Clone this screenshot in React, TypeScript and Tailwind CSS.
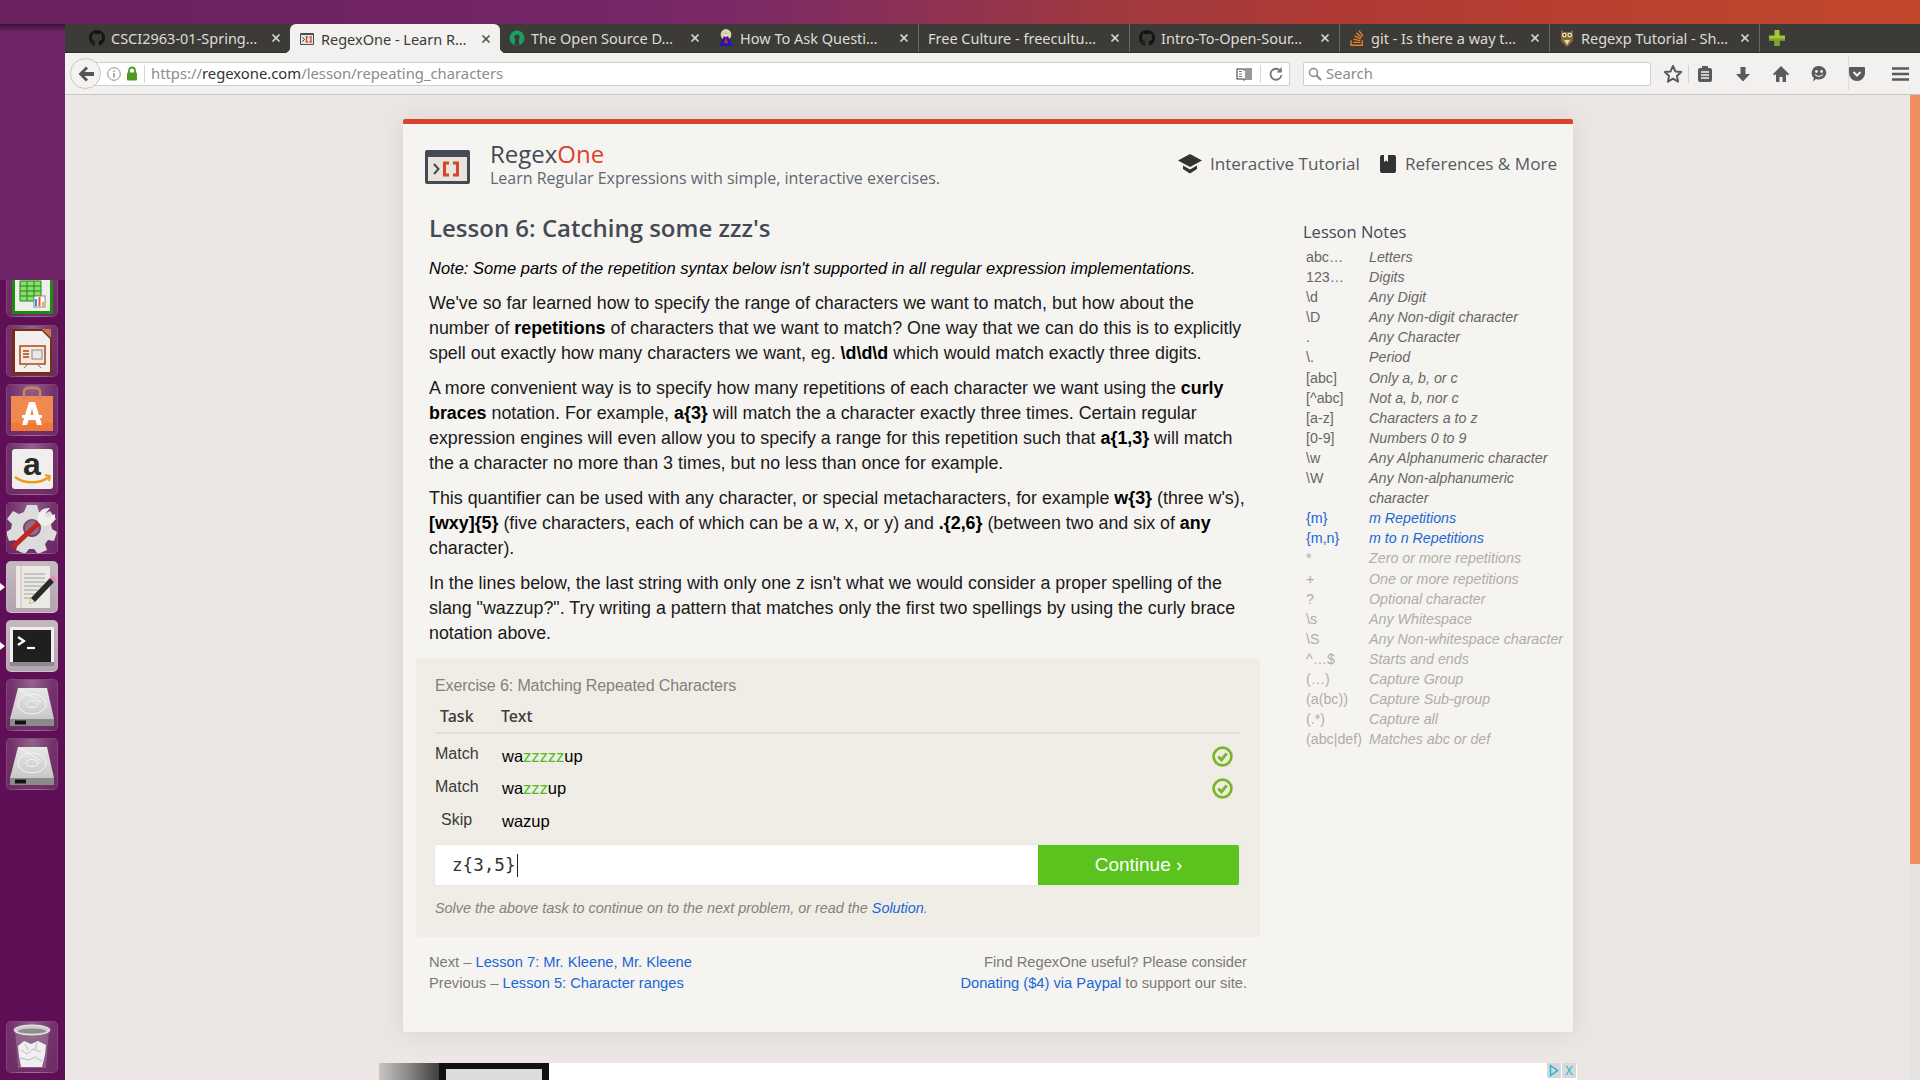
import React from "react";
import { FaGithub, FaStackOverflow } from "react-icons/fa";
import { X } from "lucide-react";

const fira = "font-['Open_Sans','Noto_Sans',sans-serif]";

function RegexFav({ s = 16 }: { s?: number }) {
  return (
    <svg width={s} height={s} viewBox="0 0 16 16">
      <rect x="1" y="2" width="14" height="12" rx="1" fill="#4a4f57" />
      <rect x="2" y="4" width="12" height="9" fill="#e5e3dc" />
      <path d="M3.500 6.500 5.500 8.500 3.500 10.500" stroke="#333" fill="none" />
      <path d="M9 6H7.500V11H9M10.500 6H12V11H10.500" stroke="#d8442a" strokeWidth="1.300" fill="none" />
    </svg>
  );
}
function OsiFav() {
  return (
    <svg width="16" height="16" viewBox="0 0 16 16">
      <circle cx="8" cy="8" r="7.500" fill="#1c9f63" />
      <circle cx="8" cy="7" r="2.600" fill="#3c3b37" />
      <path d="M6.500 8.500 5.500 15h5L9.500 8.500z" fill="#3c3b37" />
    </svg>
  );
}
function WizardFav() {
  return (
    <svg width="18" height="20" viewBox="0 0 18 20">
      <circle cx="9" cy="6" r="6" fill="#d9d6a8" />
      <path d="M9 4 17 19H1z" fill="#1a1ab8" />
      <path d="M9 9 11.500 16h-5z" fill="#e02020" />
      <circle cx="9" cy="7" r="2" fill="#f2e2c4" />
    </svg>
  );
}
function OwlFav() {
  return (
    <svg width="16" height="20" viewBox="0 0 16 20">
      <path d="M2 2 5 4h6l3-2v11l-6 6-6-6z" fill="#8a6a32" />
      <circle cx="5.300" cy="7" r="2.300" fill="#f1ebd8" />
      <circle cx="10.700" cy="7" r="2.300" fill="#f1ebd8" />
      <circle cx="5.300" cy="7" r="1" fill="#222" />
      <circle cx="10.700" cy="7" r="1" fill="#222" />
      <path d="M5 12h6l-3 5z" fill="#e6d9b8" />
    </svg>
  );
}

const tabs: { t: string; w: number; icon?: React.ReactNode; active?: boolean }[] = [
  { t: "CSCI2963-01-Spring…", w: 210, icon: <FaGithub className="text-[18px] text-[#141414]" /> },
  { t: "RegexOne - Learn R…", w: 210, icon: <RegexFav />, active: true },
  { t: "The Open Source D…", w: 209, icon: <OsiFav /> },
  { t: "How To Ask Questi…", w: 210, icon: <WizardFav /> },
  { t: "Free Culture - freecultu…", w: 211 },
  { t: "Intro-To-Open-Sour…", w: 210, icon: <FaGithub className="text-[18px] text-[#141414]" /> },
  { t: "git - Is there a way t…", w: 210, icon: <FaStackOverflow className="text-[18px] text-[#e8802a]" /> },
  { t: "Regexp Tutorial - Sh…", w: 210, icon: <OwlFav /> },
];

function TabBar() {
  return (
    <div className="h-[29px] bg-[#3c3b37] flex items-stretch pl-[15px] border-b border-[#2e2d2a] font-['Noto_Sans',sans-serif] text-[14.5px]">
      {tabs.map((tab, i) => (
        <div
          key={i}
          style={{ width: tab.w }}
          className={
            tab.active
              ? "relative z-10 flex items-center pl-[9px] pr-[8px] gap-[6px] bg-[#f2f1ef] text-[#3c3b37] rounded-t-[6px] h-[29px]"
              : "flex items-center pl-[9px] pr-[8px] gap-[6px] text-[#dcdbd6] " + (i > 2 ? "border-r border-[#6a6963]" : "")
          }
        >
          {tab.active && (
            <>
              <span className="absolute -left-[6px] bottom-0 w-[6px] h-[6px] bg-[radial-gradient(circle_at_0_0,#3c3b37_6px,#f2f1ef_6.5px)]" />
              <span className="absolute -right-[6px] bottom-0 w-[6px] h-[6px] bg-[radial-gradient(circle_at_100%_0,#3c3b37_6px,#f2f1ef_6.5px)]" />
            </>
          )}
          {tab.icon && <span className="w-[16px] flex justify-center shrink-0">{tab.icon}</span>}
          <span className="flex-1 whitespace-nowrap overflow-hidden pt-[2px]">{tab.t}</span>
          <X size={12} strokeWidth={3.5} className={tab.active ? "text-[#55544f] shrink-0" : "text-[#d8d7d2] shrink-0"} />
        </div>
      ))}
      <div className="flex items-center pl-[9px]">
        <svg width="16" height="18" viewBox="0 0 16 18">
          <path d="M5.500 1h5v5.500H16v5h-5.500V17h-5v-5.500H0v-5h5.500z" fill="#9dc73c" />
          <path d="M5.500 11.500H0v-2h16v2h-5.500V17h-5z" fill="#7ba428" />
        </svg>
      </div>
    </div>
  );
}

const ic = "#5a5a5a";
function Toolbar() {
  return (
    <div className="h-[42px] bg-[#f2f1ef] border-b border-[#c9c8c6] flex items-center relative font-['Noto_Sans',sans-serif] text-[14.8px] pl-[20px]">
      <div className="absolute left-[5px] top-[5px] w-[31px] h-[31px] rounded-full border border-[#c8c7c5] bg-[#f4f3f1] flex items-center justify-center z-10">
        <svg width="18" height="18" viewBox="0 0 18 18">
          <path d="M9 1.500 1.500 9 9 16.500l2-2L7.500 11H17V7H7.500L11 3.500z" fill="#565656" />
        </svg>
      </div>
      <div className="w-[1205px] h-[24px] bg-white border border-[#d0cfcd] rounded-r-[2px] flex items-center pl-[21px]">
        <svg width="14" height="14" viewBox="0 0 14 14">
          <circle cx="7" cy="7" r="6.300" fill="none" stroke="#8e8e8e" />
          <rect x="6.300" y="6" width="1.500" height="4.500" fill="#8e8e8e" />
          <rect x="6.300" y="3.500" width="1.500" height="1.500" fill="#8e8e8e" />
        </svg>
        <svg className="ml-[5px]" width="12" height="15" viewBox="0 0 12 15">
          <path d="M3 7V4.500a3 3 0 0 1 6 0V7" fill="none" stroke="#4f9a23" strokeWidth="1.800" />
          <rect x="1" y="6.500" width="10" height="8" rx="1" fill="#4f9a23" />
        </svg>
        <span className="w-px h-[18px] bg-[#d8d7d5] ml-[6px] mr-[6px]" />
        <span className="text-[#8c8c8c] whitespace-nowrap">
          https://<span className="text-[#333]">regexone.com</span>/lesson/repeating_characters
        </span>
        <span className="ml-auto flex items-center">
          <svg width="16" height="14" viewBox="0 0 16 14">
            <path d="M1 2h6l1 1 1-1h6v10H9l-1 1-1-1H1z" fill="none" stroke="#777" strokeWidth="1.500" />
            <path d="M3 4.500h3M3 7h3M3 9.500h3" stroke="#777" />
            <rect x="9" y="3" width="5" height="8" fill="#999" />
          </svg>
          <span className="w-px h-[18px] bg-[#d8d7d5] mx-[8px]" />
          <svg className="mr-[6px]" width="14" height="16" viewBox="0 0 14 16">
            <path d="M11.500 5A5.500 5.500 0 1 0 12.500 9" fill="none" stroke="#777" strokeWidth="1.800" />
            <path d="M12.800 1v5.500H7.500z" fill="#777" />
          </svg>
        </span>
      </div>
      <div className="ml-[13px] w-[348px] h-[24px] bg-white border border-[#d0cfcd] rounded-[2px] flex items-center pl-[3px] text-[#8c8c8c]">
        <svg width="16" height="16" viewBox="0 0 16 16">
          <circle cx="6.500" cy="6.500" r="4" fill="none" stroke="#888" strokeWidth="1.500" />
          <path d="m9.500 9.500 4.500 4.500" stroke="#888" strokeWidth="2" />
        </svg>
        <span className="ml-[3px]">Search</span>
      </div>
      <div className="relative flex-1 h-full flex items-center">
        <svg className="ml-[12px]" width="20" height="20" viewBox="0 0 20 20">
          <path d="m10 2 2.400 5.400 5.800.6-4.300 3.900 1.200 5.700-5.100-2.900-5.100 2.900 1.200-5.700L1.800 8l5.800-.6z" fill="none" stroke={ic} strokeWidth="2" strokeLinejoin="round" />
        </svg>
        <span className="w-px h-[18px] bg-[#d3d2d0] ml-[5px]" />
        <svg className="ml-[8px]" width="16" height="20" viewBox="0 0 16 20">
          <rect x="1" y="4" width="14" height="14" rx="2" fill={ic} />
          <rect x="5" y="2" width="6" height="3" fill={ic} />
          <path d="M4 8h8M4 11h8M4 14h8" stroke="#f2f1ef" strokeWidth="1.300" />
        </svg>
        <svg className="ml-[22px]" width="16" height="20" viewBox="0 0 16 20">
          <path d="M5.500 3h5v7H15l-7 7.500L1 10h4.500z" fill={ic} />
        </svg>
        <svg className="ml-[22px]" width="16" height="18" viewBox="0 0 16 18">
          <path d="M8 1 0 9l1.500 1.500L3 9v8h3.500v-5h3v5H13V9l1.500 1.500L16 9z" fill={ic} />
        </svg>
        <svg className="ml-[22px]" width="16" height="18" viewBox="0 0 16 18">
          <path d="M8 1a7.300 6.800 0 0 1 0 13.600c-1 0-2 0-3-.6L2 16.500l.8-3.500A7 7 0 0 1 8 1z" fill={ic} />
          <circle cx="5.400" cy="6.500" r="1.400" fill="#f2f1ef" />
          <circle cx="10.600" cy="6.500" r="1.400" fill="#f2f1ef" />
          <path d="M4 9.500c2 2.500 6 2.500 8 0" stroke="#f2f1ef" strokeWidth="1.200" fill="none" />
        </svg>
        <svg className="ml-[22px]" width="16" height="16" viewBox="0 0 16 16">
          <path d="M1 1h14a1 1 0 0 1 1 1v5A8 8 0 0 1 0 7V2a1 1 0 0 1 1-1z" fill={ic} />
          <path d="M4.500 6 8 9.500 11.500 6" stroke="#f2f1ef" strokeWidth="2" fill="none" />
        </svg>
        <span className="absolute left-[197px] top-[3px] h-[34px] w-px bg-[#dddcda]" />
        <svg className="ml-[27px]" width="17" height="14" viewBox="0 0 17 14">
          <path d="M0 1.500h17M0 7h17M0 12.500h17" stroke={ic} strokeWidth="2.400" />
        </svg>
      </div>
    </div>
  );
}

function Tile({ children, lit, cut, arrow }: { children: React.ReactNode; lit?: boolean; cut?: boolean; arrow?: boolean }) {
  const base = lit
    ? "bg-gradient-to-b from-[#c5b9c2] to-[#b3a4af]"
    : "bg-[radial-gradient(ellipse_at_50%_0%,#93648c_0%,#74316c_60%,#6c2a64_100%)]";
  return (
    <div className={cut ? "relative ml-[6px] w-[52px] h-[37px] overflow-hidden rounded-b-[5px] mb-[8px] shrink-0" : "relative ml-[6px] w-[52px] h-[52px] mb-[7px] shrink-0"}>
      <div className={"absolute left-0 right-0 bottom-0 h-[52px] rounded-[5px] border border-[#ffffff1f] " + base}>{children}</div>
      {arrow && <span className="absolute -left-[6px] top-[22px] w-0 h-0 border-y-[4px] border-y-transparent border-l-[5px] border-l-white" />}
    </div>
  );
}

const S = ({ children }: { children: React.ReactNode }) => (
  <svg className="absolute left-0 top-0" width="50" height="50" viewBox="0 0 50 50">
    {children}
  </svg>
);

function Disk() {
  return (
    <S>
      <defs>
        <linearGradient id="dk" x1="0" y1="0" x2="0" y2="1">
          <stop offset="0" stopColor="#e8e8e8" />
          <stop offset="1" stopColor="#c4c4c4" />
        </linearGradient>
      </defs>
      <path d="M11 8h29l7 31v3H3v-3z" fill="url(#dk)" />
      <path d="M3 39h44v7H3z" fill="#8b8b8b" />
      <path d="M8 40.500h11v4H8z" fill="#111" />
      <ellipse cx="25" cy="24" rx="14" ry="10" fill="none" stroke="#f6f6f6" />
      <ellipse cx="25" cy="24" rx="6" ry="3.500" fill="none" stroke="#f6f6f6" />
      <path d="M14 10 34 22" stroke="#f6f6f6" />
    </S>
  );
}

function Dock() {
  return (
    <div className="w-[65px] h-full bg-[#5f0f55] flex flex-col shrink-0">
      <div className="h-[256px] w-full bg-[#6e2467] shrink-0 bg-gradient-to-b from-[#3b1036] from-0% via-[#6e2467] via-3% to-[#6e2467]" />
      <Tile cut>
        <S>
          <path d="M5 2h36l5 6v40H5z" fill="#1e8a10" />
          <path d="M8 2h30l5 6v37H8z" fill="#eeeeea" />
          <path d="M13 15h21v20H13z" fill="#8ddc70" stroke="#168a0a" />
          <path d="M13 20h21M13 25h21M13 30h21M20 15v20M27 15v20" stroke="#168a0a" />
          <rect x="27" y="30" width="11" height="11" fill="#fff" stroke="#888" />
          <path d="M29 33v7" stroke="#2a8fdc" strokeWidth="2" />
          <path d="M32.500 31v9" stroke="#e4572a" strokeWidth="2" />
          <path d="M36 36v4" stroke="#f0b020" strokeWidth="2" />
        </S>
      </Tile>
      <Tile>
        <S>
          <path d="M5 3h31l9 9v37H5z" fill="#7a2d10" />
          <path d="M8 5h27l8 8v33H8z" fill="#f2f0ec" />
          <path d="M35 3h9v9z" fill="#c87a48" />
          <rect x="13" y="20" width="25" height="18" fill="#f7e9dd" stroke="#a8441c" strokeWidth="1.500" />
          <path d="M16 25h6M16 28h6M16 31h6" stroke="#a8441c" strokeWidth="1.500" />
          <rect x="25" y="24" width="10" height="9" fill="#e8e8e4" stroke="#888" />
          <path d="m21 38-4 4M30 38l4 4" stroke="#777" />
        </S>
      </Tile>
      <Tile>
        <S>
          <path d="M4 11h42v35H4z" fill="#ee7a3a" />
          <path d="M4 11h42v27H4z" fill="#f0894e" />
          <path d="M17 14V7a4 4 0 0 1 4-4h8a4 4 0 0 1 4 4v7" fill="none" stroke="#d78058" strokeWidth="2.500" />
          <path fillRule="evenodd" d="M22 17h6l7 23h-5l-1.500-5h-7L20 40h-5zM23.500 30h3L25 23z" fill="#fff" />
          <path d="M15 30h20v3H15z" fill="#fff" />
        </S>
      </Tile>
      <Tile>
        <S>
          <rect x="5" y="5" width="41" height="40" rx="3" fill="#f0efed" />
          <text x="25" y="31" textAnchor="middle" fontSize="32" fontWeight="700" fontFamily="'Liberation Sans',sans-serif" fill="#2a2a2a">a</text>
          <path d="M8 33c9 7 25 7 34 0" fill="none" stroke="#f09a1a" strokeWidth="2.500" />
          <path d="m38 31 5 1-1 5" fill="none" stroke="#f09a1a" strokeWidth="1.800" />
        </S>
      </Tile>
      <Tile>
        <S>
          <path fillRule="evenodd" d="M20 2h10l2 7 5 2 6-3 6 8-5 5 1 5 5 3-3 9-6-1-3 4 2 6-9 4-4-5h-5l-4 5-9-4 2-6-3-4-6 1-3-9 5-3 1-5-5-5 6-8 6 3 5-2zM25 16a9 9 0 1 0 .01 0z" fill="#dcdcdc" />
          <circle cx="25" cy="25" r="7" fill="#8d7088" />
          <path d="M7 43 35 17" stroke="#c0261f" strokeWidth="5" strokeLinecap="round" />
          <path d="M31 19c-2-7 3-15 12-14l-5 6 3 4 7-4c1 7-6 14-14 11z" fill="#f0efec" />
        </S>
      </Tile>
      <Tile lit arrow>
        <S>
          <rect x="9" y="4" width="34" height="42" fill="#ebe9e6" />
          <path d="M14 4v42" stroke="#e8b4b4" />
          <path d="M17 12h21M17 16h21M17 20h21M17 24h18M17 28h14M17 32h12M17 36h9" stroke="#a0a0a0" />
          <path d="m22 42 2-6 19-20 4 4-19 20z" fill="#2a2a2a" />
          <path d="m43 16 3-3 4 4-3 3z" fill="#e48ac0" />
          <path d="m22 42 2-6 4 4z" fill="#f1e3a0" />
        </S>
      </Tile>
      <Tile lit arrow>
        <S>
          <rect x="3" y="6" width="44" height="38" fill="#f1f0ee" />
          <rect x="6" y="9" width="38" height="32" fill="#1f1f1f" />
          <path d="M11 16 17 20 11 24" fill="none" stroke="#fff" strokeWidth="2.200" />
          <path d="M20 27h8" stroke="#fff" strokeWidth="2.200" />
          <rect x="3" y="41" width="44" height="4" fill="#8a8a8a" />
        </S>
      </Tile>
      <Tile><Disk /></Tile>
      <Tile><Disk /></Tile>
      <div className="mt-auto">
        <Tile>
          <S>
            <path d="M8 7h34l-3 39H11z" fill="#9d7f98" opacity=".55" />
            <ellipse cx="25" cy="8" rx="18" ry="5" fill="#cfcfcf" stroke="#eee" />
            <ellipse cx="25" cy="9" rx="14" ry="2.500" fill="#8d8d8d" />
            <path d="M11 24l6-5 7 3 7-3 8 4-1 10-3 12H14l-2-11z" fill="#efefef" />
            <path d="M14 28l6 4 6-5 8 3M13 36l9 2 6-3 7 4M18 22l3 6M30 21l-2 7" stroke="#bdbdbd" fill="none" />
          </S>
        </Tile>
      </div>
    </div>
  );
}

const b = "font-bold text-black";
const notes: [string, React.ReactNode, number][] = [
  ["abc…", "Letters", 0],
  ["123…", "Digits", 0],
  ["\\d", "Any Digit", 0],
  ["\\D", "Any Non-digit character", 0],
  [".", "Any Character", 0],
  ["\\.", "Period", 0],
  ["[abc]", "Only a, b, or c", 0],
  ["[^abc]", "Not a, b, nor c", 0],
  ["[a-z]", "Characters a to z", 0],
  ["[0-9]", "Numbers 0 to 9", 0],
  ["\\w", "Any Alphanumeric character", 0],
  ["\\W", <>Any Non-alphanumeric<br />character</>, 0],
  ["{m}", "m Repetitions", 1],
  ["{m,n}", "m to n Repetitions", 1],
  ["*", "Zero or more repetitions", 2],
  ["+", "One or more repetitions", 2],
  ["?", "Optional character", 2],
  ["\\s", "Any Whitespace", 2],
  ["\\S", "Any Non-whitespace character", 2],
  ["^…$", "Starts and ends", 2],
  ["(…)", "Capture Group", 2],
  ["(a(bc))", "Capture Sub-group", 2],
  ["(.*)", "Capture all", 2],
  ["(abc|def)", "Matches abc or def", 2],
];

function Check() {
  return (
    <svg width="21" height="21" viewBox="0 0 20 20" className="ml-auto mr-[7px]">
      <circle cx="10" cy="10" r="8.500" fill="none" stroke="#7cb52c" strokeWidth="2.600" />
      <path d="m6 10 3 3.300L14 7" fill="none" stroke="#7cb52c" strokeWidth="2.800" />
    </svg>
  );
}

function Card() {
  return (
    <div className="ml-[338px] mt-[24px] w-[1170px] h-[913px] bg-[#f6f4f1] border-t-[5px] border-[#d8442a] rounded-[2px] shadow-[0_0_24px_rgba(120,100,90,0.16)] shrink-0 font-['Liberation_Sans',sans-serif]">
      <div className="h-[80px] flex items-start pl-[22px] pr-[16px] pt-[26px]">
        <svg width="45" height="34" viewBox="0 0 45 34" className="shrink-0">
          <rect width="45" height="34" rx="2" fill="#434a54" />
          <rect x="3" y="7" width="39" height="24" fill="#e6e4dc" />
          <path d="m9 14 4.500 5L9 24" fill="none" stroke="#434a54" strokeWidth="2" />
          <path d="M24 13h-4.500v12H24M28 13h4.500v12H28" fill="none" stroke="#d8442a" strokeWidth="3" />
        </svg>
        <div className={"ml-[20px] -mt-[8px] " + fira}>
          <div className="text-[24px] leading-[24px] font-medium text-[#434a54]">
            Regex<span className="text-[#d8442a]">One</span>
          </div>
          <div className="text-[16px] leading-[20px] mt-[2px] text-[#5f6770]">Learn Regular Expressions with simple, interactive exercises.</div>
        </div>
        <div className={"ml-auto flex items-center text-[#555a60] text-[17.1px] leading-[24px] mt-[2px] " + fira}>
          <svg width="24" height="20" viewBox="0 0 24 20">
            <path d="M12 0 24 6.500 12 13 0 6.500z" fill="#333" />
            <path d="M5 11.500v3.500L12 19.500 19 15v-3.500L12 15.500z" fill="#333" />
          </svg>
          <span className="ml-[8px]">Interactive Tutorial</span>
          <svg className="ml-[20px]" width="16" height="18" viewBox="0 0 16 18">
            <path d="M2 0h12a2 2 0 0 1 2 2v14a2 2 0 0 1-2 2H2a2 2 0 0 1-2-2V2a2 2 0 0 1 2-2z" fill="#333" />
            <path d="M4 0h4v7L6 5.500 4 7z" fill="#f6f4f1" />
          </svg>
          <span className="ml-[9px]">{"References & More"}</span>
        </div>
      </div>
      <div className="flex">
        <div className="w-[857px] shrink-0">
          <div className="pl-[26px] pr-[20px]">
            <h1 className={"mt-[9px] text-[24px] leading-[30px] font-semibold text-[#434a54] " + fira}>Lesson 6: Catching some zzz's</h1>
            <div className="text-[17.85px] leading-[25px] text-[#1a1a1a] whitespace-nowrap">
              <p className="mt-[13px] italic text-[16.5px] text-black">Note: Some parts of the repetition syntax below isn't supported in all regular expression implementations.</p>
              <p className="mt-[10px]">
                We've so far learned how to specify the range of characters we want to match, but how about the<br />
                number of <span className={b}>repetitions</span> of characters that we want to match? One way that we can do this is to explicitly<br />
                spell out exactly how many characters we want, eg. <span className={b}>\d\d\d</span> which would match exactly three digits.
              </p>
              <p className="mt-[10px]">
                A more convenient way is to specify how many repetitions of each character we want using the <span className={b}>curly</span><br />
                <span className={b}>braces</span> notation. For example, <span className={b}>a{"{3}"}</span> will match the a character exactly three times. Certain regular<br />
                expression engines will even allow you to specify a range for this repetition such that <span className={b}>a{"{1,3}"}</span> will match<br />
                the a character no more than 3 times, but no less than once for example.
              </p>
              <p className="mt-[10px]">
                This quantifier can be used with any character, or special metacharacters, for example <span className={b}>w{"{3}"}</span> (three w's),<br />
                <span className={b}>[wxy]{"{5}"}</span> (five characters, each of which can be a w, x, or y) and <span className={b}>.{"{2,6}"}</span> (between two and six of <span className={b}>any</span><br />
                character).
              </p>
              <p className="mt-[10px]">
                In the lines below, the last string with only one z isn't what we would consider a proper spelling of the<br />
                slang "wazzup?". Try writing a pattern that matches only the first two spellings by using the curly brace<br />
                notation above.
              </p>
            </div>
          </div>
          <div className="ml-[13px] mt-[12px] w-[844px] h-[279px] bg-[#f0ede6] rounded-[3px] pl-[19px] pr-[20px] pt-[17px]">
            <div className="text-[16px] leading-[22px] text-[#85807a] tracking-[-0.1px]">Exercise 6: Matching Repeated Characters</div>
            <div className="h-[34px] flex items-center border-b-2 border-[#dfdedb] mt-[3px] text-[#3a3a3a]" style={{ fontFamily: "'Noto Sans',sans-serif" }}>
              <span className="w-[66px] pl-[5px] text-[16px] font-medium">Task</span>
              <span className="text-[16px] font-medium">Text</span>
            </div>
            <div className="text-[16.5px]">
              <div className="h-[32px] flex items-center mt-[6px]">
                <span className="w-[67px] text-[16px] text-[#3a3a3a] -mt-[4px]">Match</span>
                <span className="text-black">wa<span className="text-[#4fbf1a]">zzzzz</span>up</span>
                <Check />
              </div>
              <div className="h-[33px] flex items-center">
                <span className="w-[67px] text-[16px] text-[#3a3a3a] -mt-[4px]">Match</span>
                <span className="text-black">wa<span className="text-[#4fbf1a]">zzz</span>up</span>
                <Check />
              </div>
              <div className="h-[33px] flex items-center">
                <span className="w-[67px] pl-[6px] text-[16px] text-[#3a3a3a] -mt-[4px]">Skip</span>
                <span className="text-black">wazup</span>
              </div>
            </div>
            <div className="mt-[7px] mr-[1px] h-[40px] flex rounded-[2px] bg-white shadow-[0_0_2px_rgba(0,0,0,0.1)] overflow-hidden">
              <div className="w-[603px] pl-[17px] flex items-center font-['DejaVu_Sans_Mono',monospace] text-[17.6px] text-[#333]">
                z{"{3,5}"}
                <span className="ml-[1px] w-px h-[23px] bg-[#222]" />
              </div>
              <div className="flex-1 bg-[#5ac31e] text-white flex items-center justify-center text-[19px]">Continue ›</div>
            </div>
            <div className="mt-[13px] italic text-[14.4px] leading-[20px] text-[#85807a]">
              Solve the above task to continue on to the next problem, or read the <span className="text-[#1a66d6]">Solution</span>.
            </div>
          </div>
          <div className="ml-[26px] w-[818px] mt-[15px] flex justify-between text-[14.7px] leading-[21px] text-[#7a7a76]">
            <div>
              Next – <span className="text-[#1a66d6]">Lesson 7: Mr. Kleene, Mr. Kleene</span><br />
              Previous – <span className="text-[#1a66d6]">Lesson 5: Character ranges</span>
            </div>
            <div className="text-right">
              Find RegexOne useful? Please consider<br />
              <span className="text-[#1a66d6]">Donating ($4) via Paypal</span> to support our site.
            </div>
          </div>
        </div>
        <div className="pl-[43px] text-[14.25px]">
          <div className={"mt-[15px] text-[16.5px] leading-[26px] text-[#434a54] " + fira}>Lesson Notes</div>
          <div className="pl-[3px] mt-[2px]">
            {notes.map(([k, v, tone], i) => (
              <div key={i} className={"flex leading-[20.1px] " + (tone === 1 ? "text-[#1a66d6]" : tone === 2 ? "text-[#b0aca8]" : "text-[#666]")}>
                <span className="w-[63px] shrink-0 whitespace-nowrap">{k}</span>
                <span className="italic whitespace-nowrap">{v}</span>
              </div>
            ))}
          </div>
        </div>
      </div>
    </div>
  );
}

function Ad() {
  return (
    <div className="ml-[314px] mt-[31px] w-[1198px] h-[17px] bg-white flex justify-between overflow-hidden shrink-0">
      <div className="w-[170px] h-full flex">
        <div className="w-[60px] h-full bg-gradient-to-r from-[#c9c6c2] via-[#8a8886] to-[#3f3f3f]" />
        <div className="flex-1 h-full bg-[#111] px-[7px] pt-[6px]">
          <div className="h-[20px] bg-[#dcdcdc]" />
        </div>
      </div>
      <div className="flex gap-[1px] h-[15px] mr-[1px] text-[12px] leading-[15px]">
        <div className="w-[14px] bg-[#d8d8d8] flex items-center justify-center">
          <svg width="10" height="13" viewBox="0 0 10 13"><path d="M1.500 1.500 8.500 6.500 1.500 11.500z" fill="none" stroke="#18b8d0" strokeWidth="1.500" /></svg>
        </div>
        <div className="w-[14px] bg-[#d8d8d8] text-center text-[#18b8d0]">X</div>
      </div>
    </div>
  );
}

export default function App() {
  return (
    <div className="w-[1920px] h-[1080px] overflow-hidden flex flex-col">
      <div className="h-[24px] shrink-0 bg-[linear-gradient(90deg,#68205f_0%,#732568_30%,#7e2b64_40%,#a0393f_58%,#b03a34_70%,#c2482c_100%)]" />
      <div className="flex flex-1 min-h-0">
        <Dock />
        <div className="flex-1 flex flex-col min-w-0">
          <TabBar />
          <Toolbar />
          <div className="flex-1 flex min-h-0">
            <div className="flex-1 flex flex-col bg-[#ece7e4] overflow-hidden">
              <Card />
              <Ad />
            </div>
            <div className="w-[10px] bg-[#e5e3e1]">
              <div className="h-[769px] bg-[#f08d63]" />
            </div>
          </div>
        </div>
      </div>
    </div>
  );
}
